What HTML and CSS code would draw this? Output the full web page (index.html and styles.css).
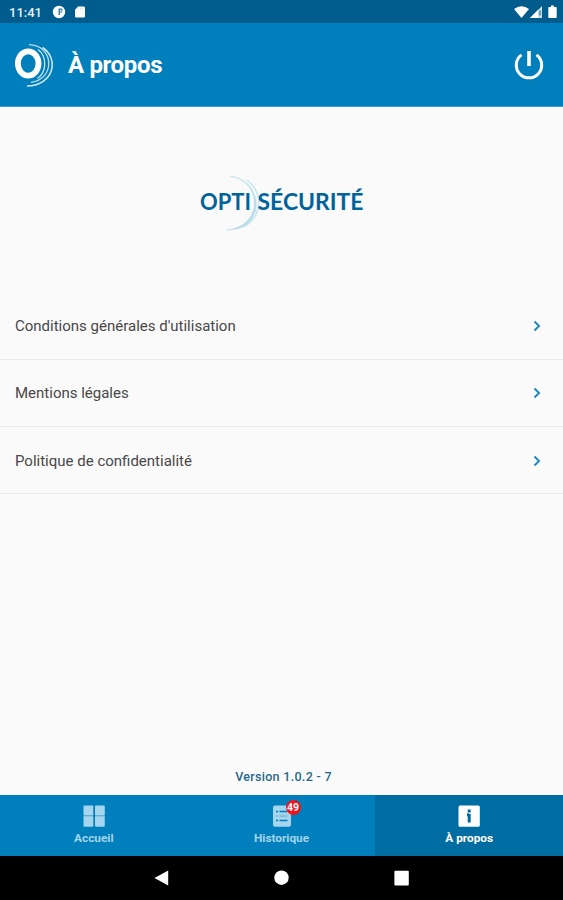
FILE: index.html
```html
<!DOCTYPE html>
<html lang="fr">
<head>
<meta charset="utf-8">
<title>À propos</title>
<link rel="stylesheet" href="styles.css">
</head>
<body>
<div class="status">
  <span class="clock">11:41</span>
  <svg class="status-left" width="34" height="14" viewBox="0 0 34 14">
    <circle cx="7" cy="7" r="6.2" fill="#fff"/>
    <path d="M6.500 3.500h3.800v4H8v2.500H6.500z" fill="#3f7fa5"/>
    <path d="M8 5h1.500v1.500H8z" fill="#fff"/>
    <path d="M26 1.500h6q1 0 1 1v9q0 1-1 1h-8q-1 0-1-1V4.700z" fill="#fff"/>
    <path d="M26.300 2.500v2M28.500 2.500v2M30.700 2.500v2" stroke="#b6d3e2" stroke-width=".7"/>
  </svg>
  <svg class="status-right" width="44" height="14" viewBox="0 0 44 14">
    <path d="M0 4Q7.500-1.500 15 4L7.500 13z" fill="#fff"/>
    <path d="M28 1v12H16z" fill="#c9dfea"/>
    <path d="M24 5v8h-8z" fill="#fff"/>
    <path d="M26 5.500v5" stroke="#2f7aa3" stroke-width="1.300"/>
    <path d="M35 2h2V.5h3V2h2q.7 0 .7.7v9.600q0 .7-.7.700h-7q-.7 0-.7-.7V2.700q0-.7.7-.7z" fill="#fff"/>
  </svg>
</div>
<header class="header">
  <svg width="42" height="46" viewBox="0 0 42 46">
    <ellipse cx="14.200" cy="21.500" rx="10.300" ry="12.200" fill="none" stroke="#fff" stroke-width="5.800"/>
    <path d="M24 7.500C33 14 33 30 23.500 36.500" fill="none" stroke="#d3e9f4" stroke-width="1.200"/>
    <path d="M15 2.600C40 3 42 37 17 40.500" fill="none" stroke="#b9dced" stroke-width="1.300"/>
    <path d="M28.500 5.500C45 16 41 43 13 44" fill="none" stroke="#d3e9f4" stroke-width="1.500"/>
  </svg>
  <h1 class="title">À propos</h1>
  <svg class="power" width="30" height="30" viewBox="0 0 30 30" fill="none" stroke="#fff" stroke-width="3">
    <path d="M15 1v15" stroke-width="3.600"/><path d="M7.500 4.900A12.700 12.700 0 1 0 22.500 4.900"/>
  </svg>
</header>
<main class="main">
  <svg class="brand" width="185" height="75" viewBox="0 0 185 75">
    <path d="M40 11.500C72 15 74 61 37 65C77 66 74 14 40 11.500z" fill="#b5dde9" stroke="#b5dde9" stroke-width=".5"/>
    <path d="M57 15C74 28 72 54 53 62" fill="none" stroke="#c3e4ed" stroke-width="1.400"/>
    <text x="10" y="45" textLength="51" lengthAdjust="spacingAndGlyphs">OPTI</text>
    <text x="67.500" y="45" textLength="106" lengthAdjust="spacingAndGlyphs">SÉCURITÉ</text>
  </svg>
  <ul class="list">
    <li class="row"><span class="label">Conditions générales d'utilisation</span><svg width="8" height="12" viewBox="0 0 8 12"><path d="M1.500 1.500 6 6l-4.500 4.500"/></svg></li>
    <li class="row"><span class="label">Mentions légales</span><svg width="8" height="12" viewBox="0 0 8 12"><path d="M1.500 1.500 6 6l-4.500 4.500"/></svg></li>
    <li class="row"><span class="label">Politique de confidentialité</span><svg width="8" height="12" viewBox="0 0 8 12"><path d="M1.500 1.500 6 6l-4.500 4.500"/></svg></li>
  </ul>
  <p class="version">Version 1.0.2 - 7</p>
</main>
<nav class="tabs">
  <div class="tab">
    <svg width="22" height="22" viewBox="0 0 22 22" fill="#a5d5ec"><rect x="0.500" y="0.500" width="9.800" height="10" rx="1"/><rect x="12" y="0.500" width="9.800" height="10" rx="1"/><rect x="0.500" y="11" width="9.800" height="10.800" rx="1"/><rect x="12" y="11" width="9.800" height="10.800" rx="1"/><path d="M.5 11h9.800m1.700 0h9.800" stroke="#74b5d9"/></svg>
    <span>Accueil</span>
  </div>
  <div class="tab">
    <div class="icon-wrap">
      <svg width="22" height="22" viewBox="0 0 22 22"><rect x="2" y="0.500" width="18" height="21.300" rx="2" fill="#a5d5ec"/><path d="M5 6.500h2m1.500 0h8M5 15.500h2m1.500 0h8" stroke="#007fbd" stroke-width="1.700"/><path d="M5 11h2m1.500 0h8" stroke="#7dbbdc" stroke-width="1.500"/></svg>
      <span class="badge">49</span>
    </div>
    <span>Historique</span>
  </div>
  <div class="tab active">
    <svg width="22" height="22" viewBox="0 0 22 22"><rect x=".5" y="0.500" width="21.300" height="21.300" rx="1.500" fill="#fff"/><path d="M11.200 4.500v3M11.200 9v8.500M9 9.700h2" stroke="#006da2" stroke-width="3"/></svg>
    <span>À propos</span>
  </div>
</nav>
<div class="system">
  <svg width="16" height="16" viewBox="0 0 16 16"><path d="M.5 8 14.200.500v15z"/></svg>
  <svg width="16" height="16" viewBox="0 0 16 16"><circle cx="7.500" cy="7.700" r="7.200"/></svg>
  <svg width="16" height="16" viewBox="0 0 16 16"><rect x=".4" y=".8" width="14.400" height="14.800" rx="1"/></svg>
</div>
</body>
</html>
```
FILE: styles.css
```css
* { box-sizing: border-box; }
body {
  margin: 0;
  height: 900px;
  display: flex;
  flex-direction: column;
  font-family: Roboto, "Liberation Sans", sans-serif;
  background: #fafafa;
  overflow: hidden;
}
svg { display: block; flex: none; }
.status {
  height: 23px;
  display: flex;
  align-items: center;
  padding: 0 7px 0 9px;
  background: #005c8c;
  color: #e4eff5;
}
.clock { width: 43px; font-size: 13px; font-weight: 500; letter-spacing: 0; line-height: 23px; padding-top: 1px; }
.status-right { margin-left: auto; margin-right: -2px; }
.header {
  height: 84px;
  display: flex;
  align-items: center;
  padding: 0 19px 0 14px;
  background: #007fbd;
  border-bottom: 1px solid #3f9fce;
  color: #fff;
}
.title { margin: 0 0 0 12px; font-size: 24px; font-weight: 700; letter-spacing: -.35px; }
.power { margin-left: auto; }
.main { flex: 1; display: flex; flex-direction: column; }
.brand {
  margin: 58px 0 0 190px;
  fill: #00639a;
  font-family: Lato, sans-serif;
  font-size: 23.5px;
  font-weight: 700;
}
.list { list-style: none; margin: 52px 0 0; padding: 0; }
.row {
  height: 67px;
  display: flex;
  align-items: center;
  justify-content: space-between;
  padding: 0 22px 0 15px;
  border-bottom: 1px solid #e9e9e9;
  color: #484848;
}
.row:first-child { height: 68px; }
.row:last-child { padding-top: 1px; }
.label { font-size: 15px; line-height: 20px; }
.row svg { fill: none; stroke: #2588c1; stroke-width: 2; }
.version { margin: auto 0 9px; padding-left: 4px; text-align: center; font-size: 12.5px; line-height: 18px; letter-spacing: .3px; color: #28698b; font-weight: 500; }
.tabs { height: 61px; display: flex; background: #007fbd; }
.tab {
  flex: 1;
  display: flex;
  flex-direction: column;
  align-items: center;
  padding-top: 10px;
  color: #a5d5ec;
  font-size: 11.8px;
  font-weight: 700;
  line-height: 14px;
  gap: 4px;
}
.active { background: #006da2; color: #fff; }
.icon-wrap { position: relative; }
.badge {
  position: absolute;
  left: 15px;
  top: -5px;
  width: 15px;
  height: 15px;
  border-radius: 50%;
  background: #f5111b;
  color: #fff;
  font-size: 10.5px;
  line-height: 15px;
  text-align: center;
}
.system { height: 44px; display: flex; justify-content: center; gap: 104px; padding-top: 14px; background: #000; }
.system svg { fill: #fff; }
```
